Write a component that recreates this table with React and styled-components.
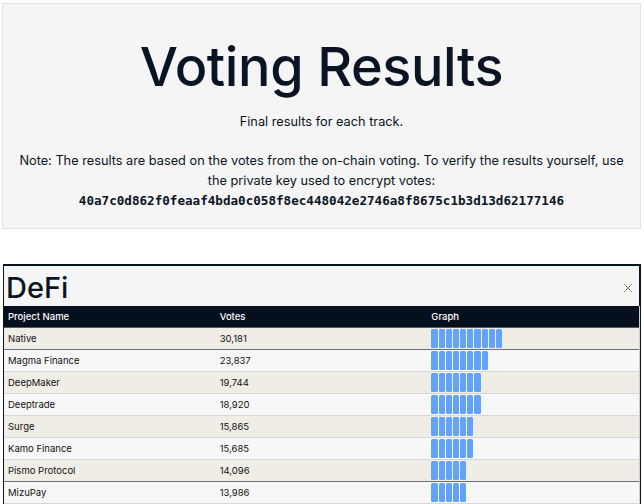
import React from 'react'
import styled, { createGlobalStyle } from 'styled-components'

const GlobalStyle = createGlobalStyle`
  html, body {
    margin: 0;
    padding: 0;
    background: #ffffff;
  }
  body {
    font-family: Inter, "Liberation Sans", sans-serif;
    color: #0b1422;
  }
`

const projects = [
  { name: 'Native', votes: '30,181', bars: 10 },
  { name: 'Magma Finance', votes: '23,837', bars: 8 },
  { name: 'DeepMaker', votes: '19,744', bars: 7 },
  { name: 'Deeptrade', votes: '18,920', bars: 7 },
  { name: 'Surge', votes: '15,865', bars: 6 },
  { name: 'Kamo Finance', votes: '15,685', bars: 6 },
  { name: 'Pismo Protocol', votes: '14,096', bars: 5 },
  { name: 'MizuPay', votes: '13,986', bars: 5 }
]

const CloseIcon = () => (
  <svg width="10" height="10" viewBox="0 0 10 10">
    <path
      d="M1.5 1.5 L8.5 8.5 M8.5 1.5 L1.5 8.5"
      stroke="#111"
      strokeWidth="1"
      strokeDasharray="1.2 1"
      fill="none"
    />
  </svg>
)

const App = () => {
  return (
    <Page>
      <GlobalStyle />
      <Intro>
        <Title>Voting Results</Title>
        <Lead>Final results for each track.</Lead>
        <Note>
          Note: The results are based on the votes from the on-chain voting. To verify the
          results yourself, use the private key used to encrypt votes:
        </Note>
        <Hash>40a7c0d862f0feaaf4bda0c058f8ec448042e2746a8f8675c1b3d13d62177146</Hash>
      </Intro>

      <Track>
        <TrackHeader>
          <TrackName>DeFi</TrackName>
          <CloseButton>
            <CloseIcon />
          </CloseButton>
        </TrackHeader>
        <Table>
          <HeadRow>
            <Cell>Project Name</Cell>
            <Cell>Votes</Cell>
            <Cell>Graph</Cell>
          </HeadRow>
          {projects.map((p, i) => (
            <Row key={p.name} shade={i % 2 === 0} strong={i === 0 || i === 6}>
              <Cell>{p.name}</Cell>
              <Cell>{p.votes}</Cell>
              <Cell>
                <Bars>
                  {Array.from({ length: p.bars }).map((_, j) => (
                    <Segment key={j} />
                  ))}
                </Bars>
              </Cell>
            </Row>
          ))}
        </Table>
      </Track>
    </Page>
  )
}

export default App

const Page = styled.div`
  padding: 3px 3px 0 2px;
  display: flex;
  flex-direction: column;
  gap: 35px;
`

const Intro = styled.section`
  background: #f5f5f5;
  border: 1px solid #e3e3e3;
  padding: 30px 10px 17px;
  display: flex;
  flex-direction: column;
  align-items: center;
  text-align: center;
`

const Title = styled.h1`
  margin: 0;
  font-size: 54px;
  font-weight: 500;
  letter-spacing: -0.4px;
  line-height: 66px;
  color: #0b1422;
`

const Lead = styled.p`
  margin: 12px 0 0;
  font-size: 12.75px;
  line-height: 20px;
`

const Note = styled.p`
  margin: 19px 0 0;
  font-size: 12.75px;
  line-height: 20px;
  max-width: 610px;
`

const Hash = styled.div`
  font-family: "DejaVu Sans Mono", "Liberation Mono", monospace;
  font-weight: bold;
  font-size: 12.6px;
  line-height: 20px;
`

const Track = styled.section`
  margin-left: 1px;
  border-top: 2px solid #0b1422;
  border-left: 1px solid #0b1422;
  border-right: 2px solid #0b1422;
  background: #f5f5f5;
`

const TrackHeader = styled.div`
  display: flex;
  align-items: center;
  justify-content: space-between;
  height: 40px;
  padding: 0 6px 0 2px;
`

const TrackName = styled.h2`
  margin: 0;
  font-size: 29px;
  font-weight: 500;
  line-height: 40px;
  padding-top: 4px;
`

const CloseButton = styled.span`
  display: flex;
  margin-top: 4px;
`

const Table = styled.div`
  display: flex;
  flex-direction: column;
  margin-right: -1px;
  border-right: 1px solid #cfcfcf;
`

const HeadRow = styled.div`
  display: grid;
  grid-template-columns: repeat(3, 1fr);
  align-items: center;
  height: 21px;
  background: #06101d;
  color: #ffffff;
  font-size: 9.5px;
  font-weight: 500;
  border-bottom: 1px solid #555c64;
`

const Row = styled.div`
  display: grid;
  grid-template-columns: repeat(3, 1fr);
  align-items: center;
  height: 21px;
  background: ${props => (props.shade ? '#f0ede6' : '#f7f7f7')};
  font-size: 9.5px;
  color: #111;
  border-bottom: 1px solid ${props => (props.strong ? '#6a7078' : '#d6d6d6')};
`

const Cell = styled.div`
  padding-left: 4px;
  white-space: nowrap;
`

const Bars = styled.div`
  display: flex;
  gap: 1px;
  height: 19px;
`

const Segment = styled.div`
  width: 6.2px;
  height: 100%;
  background: #62a3f8;
  border-radius: 1.5px;
`
